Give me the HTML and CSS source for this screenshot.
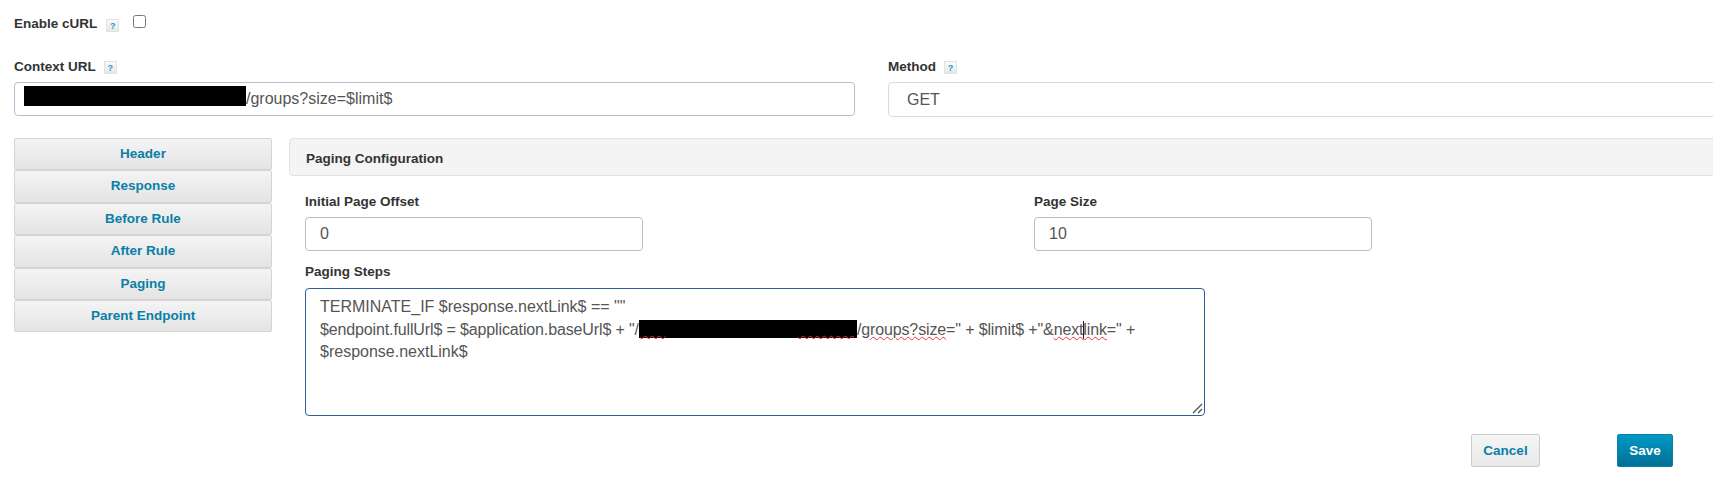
FILE: index.html
```html
<!DOCTYPE html>
<html lang="en">
<head>
<meta charset="utf-8">
<title>Paging Configuration</title>
<link rel="stylesheet" href="styles.css">
</head>
<body>
<div class="page">
  <div class="curl-row">
    <span class="label">Enable cURL</span>
    <span class="help">?</span>
    <input class="check" type="checkbox">
  </div>
  <div class="url-row">
    <div>
      <div class="label-row"><span class="label">Context URL</span><span class="help">?</span></div>
      <div class="field url-field"><span class="redact url-redact"></span><span>/groups?size=$limit$</span></div>
    </div>
    <div>
      <div class="label-row"><span class="label">Method</span><span class="help">?</span></div>
      <div class="field method-field">GET</div>
    </div>
  </div>
  <div class="main">
    <nav class="tabs">
      <a class="tab">Header</a>
      <a class="tab">Response</a>
      <a class="tab">Before Rule</a>
      <a class="tab">After Rule</a>
      <a class="tab">Paging</a>
      <a class="tab">Parent Endpoint</a>
    </nav>
    <section class="panel">
      <h2 class="panel-title">Paging Configuration</h2>
      <div class="panel-body">
        <div class="pair">
          <div>
            <div class="label field-label">Initial Page Offset</div>
            <div class="field small-field">0</div>
          </div>
          <div>
            <div class="label field-label">Page Size</div>
            <div class="field small-field">10</div>
          </div>
        </div>
        <div class="label steps-label">Paging Steps</div>
        <div class="steps">
          <div>TERMINATE_IF $response.nextLink$ == ""</div>
          <div class="tight">$endpoint.fullUrl$ = $application.baseUrl$ + "/<span class="redact steps-redact"><span class="squiggle sq-a">&nbsp;&nbsp;&nbsp;&nbsp;&nbsp;&nbsp;</span><span class="squiggle sq-b">&nbsp;&nbsp;&nbsp;&nbsp;&nbsp;&nbsp;&nbsp;&nbsp;&nbsp;&nbsp;&nbsp;&nbsp;&nbsp;</span></span>/<span class="wavy">groups?size</span>=" + $limit$ +"&amp;<span class="wavy">next<span class="caret"></span>link</span>=" +</div>
          <div>$response.nextLink$</div>
          <svg class="grip" width="11" height="11" viewBox="0 0 11 11"><path d="M1 10 L10 1 M6 10 L10 6" stroke="#555" stroke-width="1.4" fill="none"/></svg>
        </div>
      </div>
    </section>
  </div>
  <div class="actions">
    <button class="btn cancel">Cancel</button>
    <button class="btn save">Save</button>
  </div>
</div>
</body>
</html>
```
FILE: styles.css
```css
html, body {
  margin: 0;
  padding: 0;
  background: #fff;
  overflow: hidden;
}
.page {
  width: 1800px;
  height: 478px;
  padding-left: 14px;
  box-sizing: border-box;
  font-family: "Liberation Sans", Arial, sans-serif;
  color: #333;
}
.label {
  font-size: 13.5px;
  font-weight: 700;
  line-height: 16px;
  color: #333;
}
.help {
  display: inline-block;
  width: 13px;
  height: 13px;
  box-sizing: border-box;
  border: 1px solid #dfe3e6;
  background: linear-gradient(#fafafa, #e8e8e8);
  color: #1d9cc4;
  font-size: 9px;
  font-weight: 700;
  line-height: 12px;
  text-align: center;
}
.curl-row {
  display: flex;
  align-items: flex-start;
  padding-top: 15px;
  height: 44px;
  box-sizing: content-box;
}
.curl-row .label {
  margin-top: 1px;
}
.curl-row .help {
  margin: 4px 0 0 9px;
}
.check {
  width: 13px;
  height: 13px;
  margin: 0 0 0 14px;
}
.url-row {
  display: grid;
  grid-template-columns: 841px 900px;
  column-gap: 33px;
}
.label-row {
  display: flex;
  align-items: center;
  gap: 8px;
  height: 16px;
  margin-bottom: 7px;
}
.field {
  box-sizing: border-box;
  border: 1px solid #b9bccd;
  border-radius: 4px;
  background: #fff;
  color: #555;
  font-size: 16px;
  display: flex;
  align-items: center;
  padding-left: 14px;
}
.url-field {
  height: 34px;
  padding-left: 9px;
}
.method-field {
  height: 35px;
  padding-left: 18px;
  border-color: #d9d9e4;
}
.small-field {
  width: 338px;
  height: 34px;
}
.redact {
  display: inline-block;
  background: #000;
  flex: none;
}
.url-redact {
  width: 222px;
  height: 20px;
  align-self: flex-start;
  margin-top: 3px;
}
.main {
  display: grid;
  grid-template-columns: 258px 1500px;
  column-gap: 17px;
  margin-top: 21px;
}
.tabs {
  display: flex;
  flex-direction: column;
}
.tab {
  height: 32.4px;
  box-sizing: border-box;
  border: 1px solid #d4d4d4;
  border-radius: 2px;
  background: linear-gradient(#f4f4f4, #e4e4e4);
  color: #0a7fa6;
  font-size: 13.5px;
  font-weight: 700;
  line-height: 29px;
  text-align: center;
}
.panel-title {
  margin: 0;
  height: 38px;
  box-sizing: border-box;
  border: 1px solid #e0e2e6;
  border-radius: 4px 0 0 4px;
  background: #f4f4f4;
  padding-left: 16px;
  font-size: 13.5px;
  font-weight: 700;
  line-height: 39px;
  color: #333;
}
.panel-body {
  padding-left: 16px;
}
.pair {
  display: grid;
  grid-template-columns: 729px 338px;
  padding-top: 18px;
}
.field-label {
  height: 16px;
  margin-bottom: 7px;
}
.steps-label {
  height: 16px;
  margin-top: 13px;
  margin-bottom: 8px;
}
.steps {
  position: relative;
  width: 900px;
  height: 128px;
  box-sizing: border-box;
  border: 1px solid #2a5f9e;
  border-radius: 4px;
  padding: 7px 14px;
  color: #555;
  font-size: 16px;
  line-height: 22.5px;
  white-space: nowrap;
}
.tight {
  letter-spacing: -0.13px;
}
.steps-redact {
  position: relative;
  width: 218px;
  height: 18px;
  vertical-align: -3px;
}
.squiggle {
  position: absolute;
  top: -2px;
  text-decoration: underline wavy #e8323c;
  text-decoration-thickness: 1px;
  color: transparent;
}
.sq-a {
  left: 1px;
}
.sq-b {
  left: 159px;
}
.wavy {
  text-decoration: underline wavy #e8323c;
  text-decoration-thickness: 1px;
}
.caret {
  display: inline-block;
  width: 1px;
  height: 18px;
  margin-right: -1px;
  background: #222;
  vertical-align: -4px;
}
.grip {
  position: absolute;
  right: 1px;
  bottom: 1px;
}
.actions {
  display: flex;
  justify-content: flex-end;
  gap: 77px;
  width: 1659px;
  margin-top: 18px;
}
.btn {
  height: 33px;
  box-sizing: border-box;
  border-radius: 2px;
  font-family: inherit;
  font-size: 13.5px;
  font-weight: 700;
  padding: 0;
}
.cancel {
  width: 69px;
  border: 1px solid #ccc;
  background: linear-gradient(#f6f6f6, #e8e8e8);
  color: #0a7fa6;
}
.save {
  width: 56px;
  border: 1px solid #0a7fa6;
  background: linear-gradient(#009ac6, #006f96);
  color: #fff;
}
```
